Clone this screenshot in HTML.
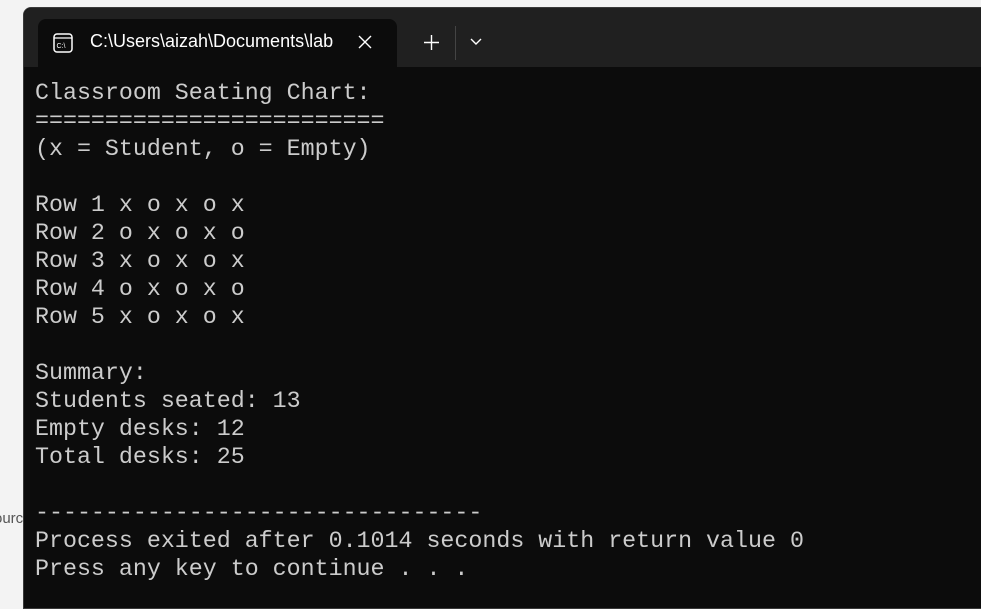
<!DOCTYPE html>
<html><head><style>
html,body{margin:0;padding:0;width:981px;height:599px;overflow:hidden;background:#f3f3f3;}
.win{position:absolute;left:23px;top:7px;width:970px;height:600px;background:#0c0c0c;border-radius:8px 0 0 0;border:1px solid #3a3a3a;}
.bar{position:absolute;left:0;top:0;width:100%;height:59px;background:#202020;border-radius:8px 0 0 0;}
.tab{position:absolute;left:14px;top:11px;width:359px;height:48px;background:#0c0c0c;border-radius:8px 8px 0 0;}
.title{position:absolute;left:66px;top:23px;color:#fff;font:18px "Liberation Sans",sans-serif;width:246px;white-space:nowrap;overflow:hidden;}
pre{position:absolute;left:11px;top:71px;margin:0;color:#cccccc;font:23.3px/28px "Liberation Mono",monospace;}
.left{position:absolute;left:0;width:23px;height:40px;color:#555;font:15px "Liberation Sans",sans-serif;}
</style></head><body>
<div class="left" style="top:510px;overflow:hidden;"><span style="position:absolute;left:-6px">ourc</span></div>
<div class="win">
 <div class="bar"></div>
 <div class="tab"></div>
 <svg style="position:absolute;left:29px;top:25px" width="20" height="20" viewBox="0 0 20 20"><rect x="1" y="1" width="18" height="18" rx="3" fill="none" stroke="#fff" stroke-width="1.5"/><line x1="1" y1="5" x2="19" y2="5" stroke="#fff" stroke-width="1.3"/><text x="3.5" y="15" fill="#fff" font-size="7" font-family="Liberation Sans">C:\</text></svg>
 <div class="title">C:\Users\aizah\Documents\lab</div>
 <svg style="position:absolute;left:334px;top:27px" width="14" height="14"><path d="M1 1L13 13M13 1L1 13" stroke="#fff" stroke-width="1.4"/></svg>
 <svg style="position:absolute;left:400px;top:27px" width="15" height="15"><path d="M7.5 0V15M0 7.5H15" stroke="#fff" stroke-width="1.4"/></svg>
 <div style="position:absolute;left:431px;top:18px;width:1px;height:34px;background:#444"></div>
 <svg style="position:absolute;left:446px;top:30px" width="12" height="8"><path d="M1 1L6 6L11 1" stroke="#fff" stroke-width="1.4" fill="none"/></svg>
<pre>Classroom Seating Chart:
=========================
(x = Student, o = Empty)

Row 1 x o x o x
Row 2 o x o x o
Row 3 x o x o x
Row 4 o x o x o
Row 5 x o x o x

Summary:
Students seated: 13
Empty desks: 12
Total desks: 25

--------------------------------
Process exited after 0.1014 seconds with return value 0
Press any key to continue . . .</pre>
</div>
</body></html>
